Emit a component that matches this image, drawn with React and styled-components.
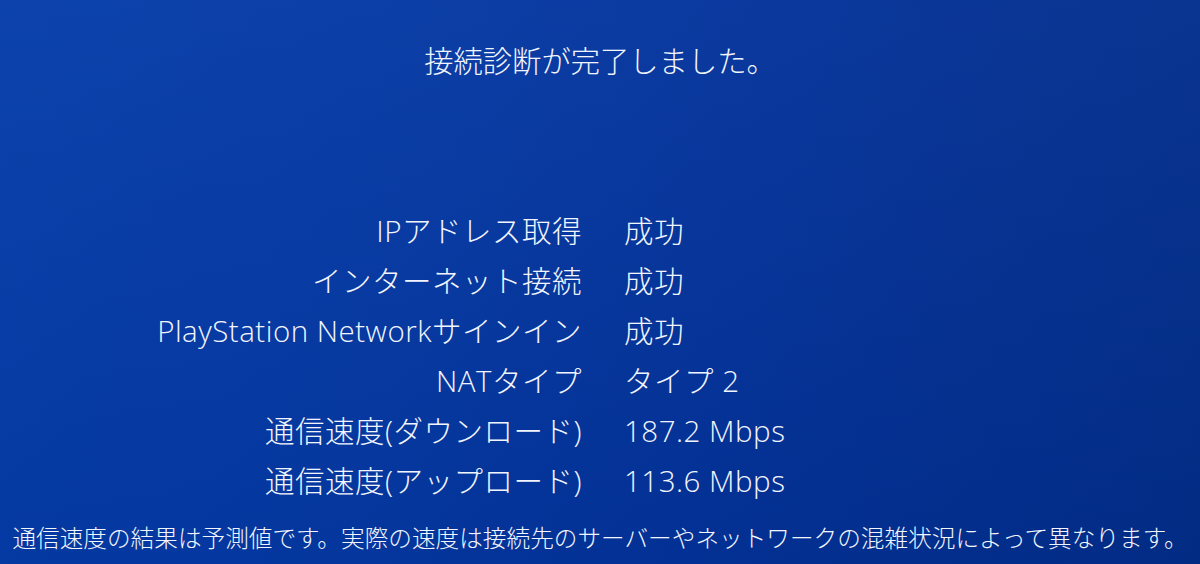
import React from "react";
import styled, { createGlobalStyle } from "styled-components";

const GlobalStyle = createGlobalStyle`
  html, body {
    margin: 0;
    padding: 0;
    background: #0336a0;
  }
  body {
    font-family: "Open Sans", "Noto Sans CJK JP", "Noto Sans", sans-serif;
  }
`;

const Screen = styled.div`
  width: 1200px;
  height: 564px;
  overflow: hidden;
  display: flex;
  flex-direction: column;
  color: #f2f5fd;
  font-weight: 300;
  background:
    linear-gradient(180deg, rgba(255, 255, 255, 0.03) 0%, rgba(0, 0, 0, 0.04) 100%),
    linear-gradient(100deg, #053caa 0%, #0438a3 35%, #03329a 60%, #022d89 100%);
`;

const Title = styled.h1`
  margin: 0;
  padding-top: 41px;
  font-size: 29.3px;
  font-weight: 300;
  line-height: 40px;
  text-align: center;
`;

const Results = styled.dl`
  margin: 125px 0 0;
  display: grid;
  grid-template-columns: 582px 1fr;
  column-gap: 42px;
  grid-auto-rows: 50px;
  font-size: 29.5px;
  line-height: 50px;
  letter-spacing: 0.5px;
`;

const Label = styled.dt`
  margin: 0;
  text-align: right;
  white-space: nowrap;
`;

const Value = styled.dd`
  margin: 0;
  white-space: nowrap;
`;

const Note = styled.p`
  margin: 17px 0 0;
  font-size: 23.65px;
  line-height: 30px;
  text-align: center;
  white-space: nowrap;
`;

const rows = [
  ["IPアドレス取得", "成功"],
  ["インターネット接続", "成功"],
  ["PlayStation Networkサインイン", "成功"],
  ["NATタイプ", "タイプ 2"],
  ["通信速度(ダウンロード)", "187.2 Mbps"],
  ["通信速度(アップロード)", "113.6 Mbps"],
];

export default function App() {
  return (
    <>
      <GlobalStyle />
      <Screen>
        <Title>接続診断が完了しました。</Title>
        <Results>
          {rows.map(([label, value]) => (
            <React.Fragment key={label}>
              <Label>{label}</Label>
              <Value>{value}</Value>
            </React.Fragment>
          ))}
        </Results>
        <Note>
          通信速度の結果は予測値です。実際の速度は接続先のサーバーやネットワークの混雑状況によって異なります。
        </Note>
      </Screen>
    </>
  );
}
